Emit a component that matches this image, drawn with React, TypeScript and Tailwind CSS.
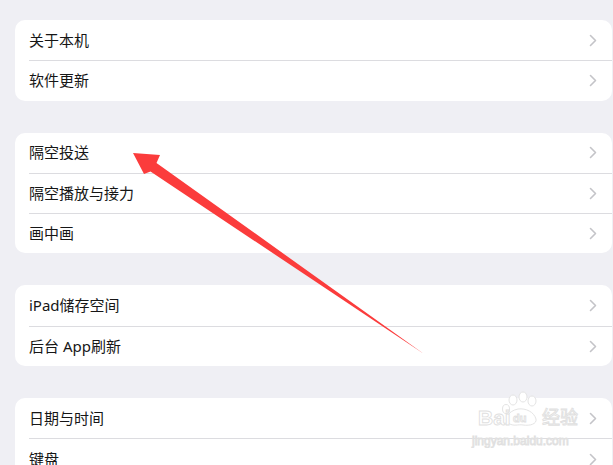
import React from 'react';

const groups = [
  ['关于本机', '软件更新'],
  ['隔空投送', '隔空播放与接力', '画中画'],
  ['iPad储存空间', '后台 App刷新'],
  ['日期与时间', '键盘', '字体'],
];

const Chevron = () => (
  <svg width="8" height="13" viewBox="0 0 8 13" fill="none">
    <path d="M1.5 1.5 L6.5 6.5 L1.5 11.5" stroke="#c4c4c8" strokeWidth="1.6" strokeLinecap="round" strokeLinejoin="round" />
  </svg>
);

const Row = ({ label, first }: { label: string; first: boolean }) => (
  <div className="pl-[14px] h-[40.3px]">
    <div
      className={`flex items-center justify-between h-full pr-[15px] ${first ? '' : 'border-t border-[#dcdce0]'}`}
    >
      <span className="text-[15px] text-[#161616] leading-none">{label}</span>
      <Chevron />
    </div>
  </div>
);

const App = () => {
  return (
    <div
      className="relative w-[613px] h-[465px] overflow-hidden bg-[#efeff4] pt-[20px] pl-[15px] pr-[1px]"
      style={{ fontFamily: '"Noto Sans", "Noto Sans CJK SC", sans-serif' }}
    >
      <div className="flex flex-col gap-8">
        {groups.map((rows, gi) => (
          <div key={gi} className="bg-white rounded-[10px] overflow-hidden">
            {rows.map((label, ri) => (
              <Row key={ri} label={label} first={ri === 0} />
            ))}
          </div>
        ))}
      </div>

      {/* red annotation arrow */}
      <svg className="absolute left-0 top-0 pointer-events-none" width="613" height="465">
        <polygon
          points="133,153 160,155 156.5,163 424,354 150.5,171.5 144,174"
          fill="#fb3c3c"
        />
      </svg>

      {/* baidu jingyan watermark */}
      <svg className="absolute left-[468px] top-[390px] pointer-events-none" width="112" height="58">
        <g fill="#ffffff" stroke="#e4e4e4" strokeWidth="1">
          <ellipse cx="45" cy="10" rx="4" ry="5" />
          <ellipse cx="55" cy="7" rx="4" ry="5" />
          <ellipse cx="64" cy="11" rx="4" ry="5" />
          <ellipse cx="38" cy="19" rx="3.5" ry="4.5" />
          <path d="M40 33 C36 29 40 21 50 19 C58 18 66 22 68 29 C69 34 62 36 55 35 C50 34 46 37 40 33 Z" />
        </g>
        <g fontFamily="Liberation Sans, sans-serif" fill="#ffffff" stroke="#e0e0e0" strokeWidth="0.9">
          <text x="10" y="35" fontSize="21" fontWeight="bold">Bai</text>
          <text x="45" y="32" fontSize="11" fontWeight="bold">du</text>
          <text x="74" y="34" fontSize="18" fontFamily="Noto Sans CJK SC, sans-serif">经验</text>
          <text x="4" y="55" fontSize="12">jingyan.baidu.com</text>
        </g>
      </svg>
    </div>
  );
};

export default App;
